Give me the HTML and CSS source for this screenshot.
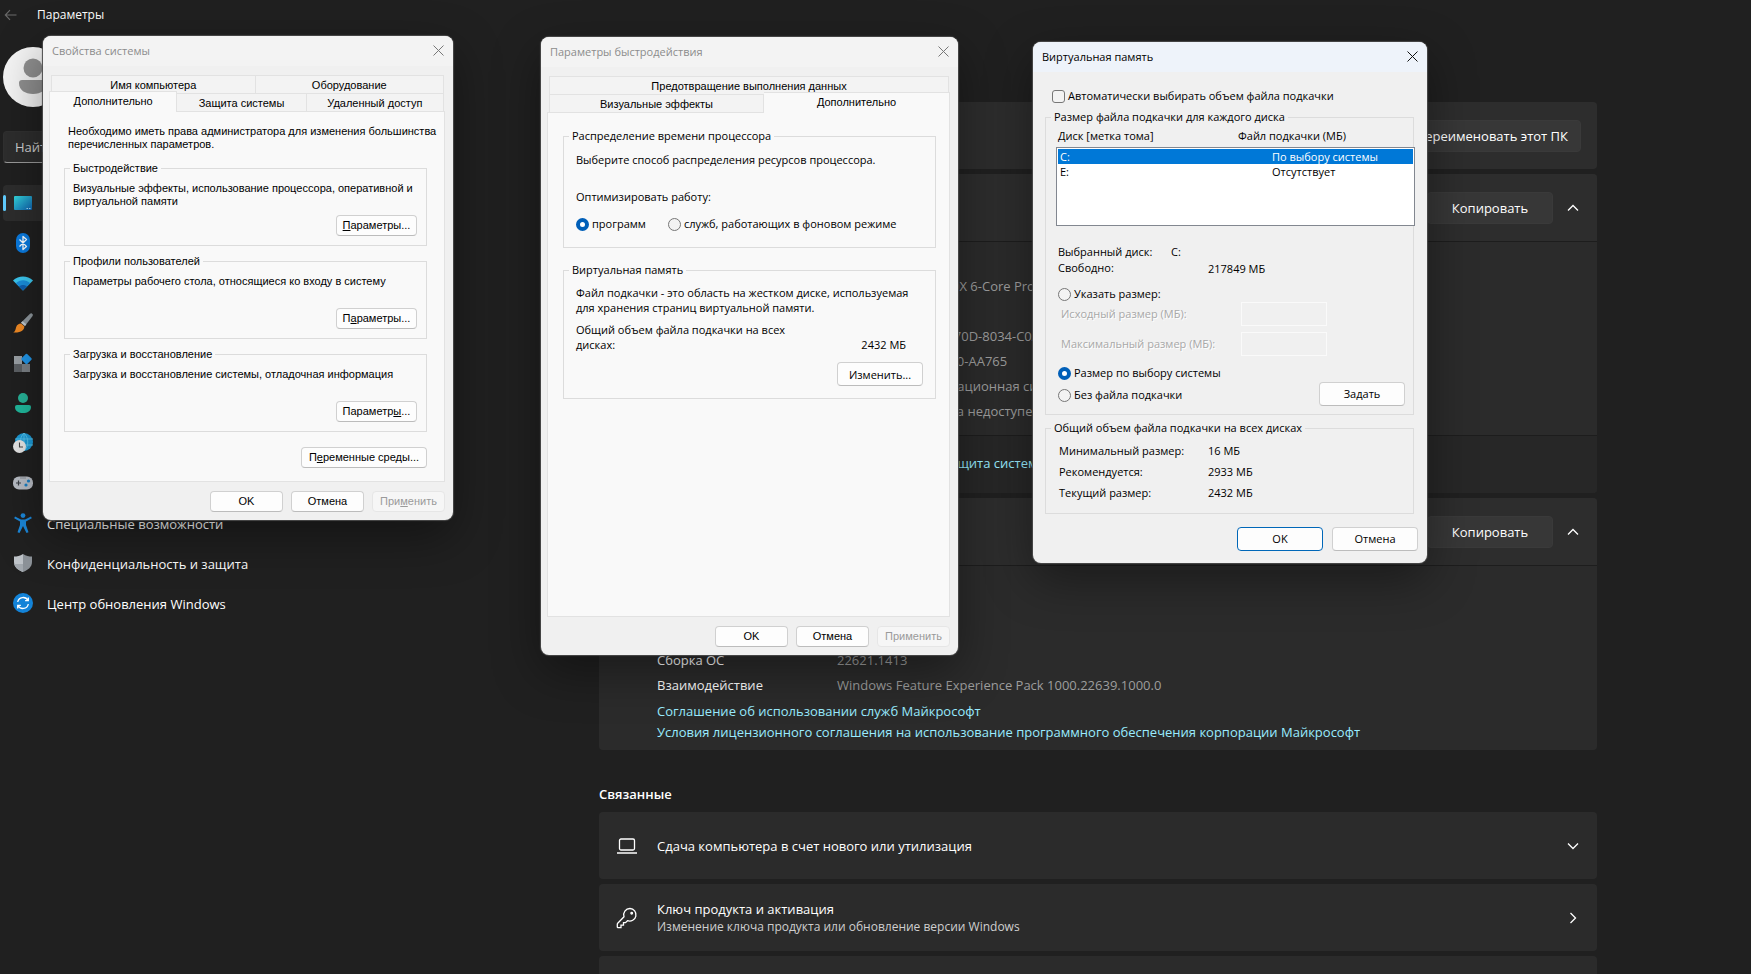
FILE: index.html
```
<!DOCTYPE html>
<html lang="ru">
<head>
<meta charset="utf-8">
<title>Параметры</title>
<link rel="stylesheet" href="styles.css">
</head>
<body>
<div class="settings">
  <header class="topbar">
    <button class="back" type="button" aria-label="Назад">
      <svg width="14" height="12" viewBox="0 0 14 12"><path d="M1.5 6H12.500M6 1.200L1.300 6L6 10.800" fill="none" stroke="#6a6a6a" stroke-width="1.100"/></svg>
    </button>
    <h1 class="app-title">Параметры</h1>
  </header>

  <div class="columns">
    <aside class="sidebar">
      <div class="avatar">
        <svg width="60" height="60" viewBox="0 0 60 60"><circle cx="30" cy="30" r="30" fill="#f4f4f4"/><circle cx="30" cy="21" r="9.500" fill="#8f8f8f"/><path d="M19 33h22a3 3 0 0 1 3 3c0 7-6 11-14 11s-14-4-14-11a3 3 0 0 1 3-3z" fill="#8f8f8f"/></svg>
      </div>
      <input class="search" type="text" placeholder="Найти параметр" aria-label="Найти параметр">
      <nav class="nav">
        <a class="nav-item current" href="#">
          <svg class="nav-icon" viewBox="0 0 20 20"><defs><linearGradient id="g-sys" x1="0" y1="0" x2="1" y2="1"><stop offset="0" stop-color="#34d6dc"/><stop offset="1" stop-color="#0f62b0"/></linearGradient></defs><rect x="1" y="3" width="18" height="14" rx="1" fill="url(#g-sys)"/><path d="M13.500 15.500h1.500M16 15.500h1.500" stroke="#9fd8f5" stroke-width="1"/></svg>
          <span>Система</span></a>
        <a class="nav-item" href="#">
          <svg class="nav-icon" viewBox="0 0 20 20"><rect x="3" y="0" width="14" height="20" rx="7" fill="#0a7be0"/><path d="M6.500 6.500l7 7L10 16.500V3.500l3.500 3L6.500 13.500" fill="none" stroke="#fff" stroke-width="1.300" stroke-linejoin="round"/></svg>
          <span>Bluetooth и устройства</span></a>
        <a class="nav-item" href="#">
          <svg class="nav-icon" viewBox="0 0 20 20"><path d="M0 7.500C5.500 2 14.500 2 20 7.500L10 17.500z" fill="#3cc8f0"/><path d="M2.800 10.300C7 6.300 13 6.300 17.200 10.300L10 17.500z" fill="#1a8fdc"/><path d="M6 13.500c2.400-2 5.600-2 8 0l-4 4z" fill="#0f5fb0"/></svg>
          <span>Сеть и Интернет</span></a>
        <a class="nav-item" href="#">
          <svg class="nav-icon" viewBox="0 0 20 20"><path d="M18.800.4c1.200.6 1.300 1.500.8 2.500L12 13l-4-3.200L17 .8c.6-.5 1.200-.7 1.800-.4z" fill="#8e979d"/><path d="M9.500 8.200L8 9.800l4 3.200 1.300-1.700z" fill="#c3cacf"/><path d="M8 10.500l3.300 2.800c.3 4-3.500 6.700-11 6.200 2.300-1.200 2-3 2.800-5.300.8-2.400 2.700-3.700 4.900-3.700z" fill="#f08a24"/></svg>
          <span>Персонализация</span></a>
        <a class="nav-item" href="#">
          <svg class="nav-icon" viewBox="0 0 20 20"><rect x="1" y="3" width="8" height="8" fill="#9aa0a5"/><rect x="1" y="11" width="8" height="8" fill="#5d6165"/><rect x="9" y="11" width="8" height="8" fill="#7b8085"/><rect x="9.500" y="2" width="8" height="8" rx="1" transform="rotate(45 13.500 6)" fill="#2196e8"/></svg>
          <span>Приложения</span></a>
        <a class="nav-item" href="#">
          <svg class="nav-icon" viewBox="0 0 20 20"><circle cx="10" cy="5" r="5" fill="#27b398"/><path d="M4 12h12a2 2 0 0 1 2 2c0 4-3.500 6-8 6s-8-2-8-6a2 2 0 0 1 2-2z" fill="#20b89c"/></svg>
          <span>Учетные записи</span></a>
        <a class="nav-item" href="#">
          <svg class="nav-icon" viewBox="0 0 20 20"><circle cx="11" cy="9" r="9" fill="#1c9ad6"/><path d="M11 0v18M2 6h18M3 12h17M11 0c-5 5-5 13 0 18M11 0c5 5 5 13 0 18" fill="none" stroke="#5fc9ee" stroke-width=".8"/><circle cx="6.500" cy="13.500" r="6.500" fill="#e6e6e6"/><path d="M6.500 9.500v4.500h3.500" fill="none" stroke="#444" stroke-width="1.100"/></svg>
          <span>Время и язык</span></a>
        <a class="nav-item" href="#">
          <svg class="nav-icon" viewBox="0 0 20 20"><rect x="0" y="3.500" width="20" height="13" rx="6" fill="#b9bec6"/><path d="M3 10h5M5.500 7.500v5" stroke="#3b3f45" stroke-width="1.200"/><circle cx="15.500" cy="8" r="1.600" fill="#1a7fc4"/><circle cx="13" cy="12" r="1.600" fill="#1a7fc4"/><path d="M7.500 5h5" stroke="#5a5f66" stroke-width="1" stroke-dasharray="1 1"/></svg>
          <span>Игры</span></a>
        <a class="nav-item" href="#">
          <svg class="nav-icon" viewBox="0 0 20 20"><circle cx="10" cy="2.600" r="2.400" fill="#1b86d8"/><path d="M2 3.500l6 3h4l6-3 .8 1.800L13 8.500v3.500l2.500 7.200-2 .8L10 13l-3.500 7-2-.8L7 12V8.500L1.200 5.300z" fill="#1b86d8"/></svg>
          <span>Специальные возможности</span></a>
        <a class="nav-item" href="#">
          <svg class="nav-icon" viewBox="0 0 20 20"><path d="M10 1c3 2 6 2.500 9 2.500V9c0 5-4 8-9 10z" fill="#8d9399"/><path d="M10 1C7 3 4 3.500 1 3.500V9c0 5 4 8 9 10z" fill="#bfc4c9"/><path d="M1.300 11H10v8c-4.500-1.700-8-4.300-8.700-8z" fill="#a3a9af"/></svg>
          <span>Конфиденциальность и защита</span></a>
        <a class="nav-item" href="#">
          <svg class="nav-icon" viewBox="0 0 20 20"><circle cx="10" cy="10" r="10" fill="#1383d8"/><path d="M4.700 9A5.500 5.500 0 0 1 15 7.500M15.300 11A5.500 5.500 0 0 1 5 12.500M15.300 4.500v3.200h-3.200M4.700 15.500v-3.200h3.200" fill="none" stroke="#fff" stroke-width="1.300"/></svg>
          <span>Центр обновления Windows</span></a>
      </nav>
    </aside>

    <main class="content">
      <div class="stack">
        <section class="card card-row end">
          <button class="dark-btn" type="button">Переименовать этот ПК</button>
        </section>

        <section class="card">
          <div class="card-row end">
            <button class="dark-btn wide" type="button">Копировать</button>
            <svg class="chev" viewBox="0 0 16 16"><path d="M3 10.500L8 5.500l5 5" /></svg>
          </div>
          <dl class="specs">
            <dt>Имя устройства</dt><dd>DESKTOP-4KR7UMV</dd>
            <dt>Процессор</dt><dd>AMD Ryzen™ 5 5600X 6-Core Processor</dd>
            <dt>ОЗУ</dt><dd>16,0 ГБ</dd>
            <dt>Код устройства</dt><dd>7ADCDD00-DFDB-470D-8034-C0A91B6D2E4F</dd>
            <dt>Код продукта</dt><dd>00330-80000-000000-AA765</dd>
            <dt>Тип системы</dt><dd>64-разрядная операционная система</dd>
            <dt>Перо и сенсорный ввод</dt><dd>Для этого монитора недоступен ввод с помощью пера</dd>
          </dl>
          <div class="related">
            <span class="related-label">Ссылки</span>
            <a href="#">Домен или рабочая группа</a>
            <a href="#">Защита системы</a>
          </div>
        </section>

        <section class="card">
          <div class="card-row end">
            <button class="dark-btn wide" type="button">Копировать</button>
            <svg class="chev" viewBox="0 0 16 16"><path d="M3 10.500L8 5.500l5 5" /></svg>
          </div>
          <dl class="specs os">
            <dt>Выпуск</dt><dd>Windows 11 Pro</dd>
            <dt>Версия</dt><dd>22H2</dd>
            <dt>Дата установки</dt><dd>2023</dd>
            <dt>Сборка ОС</dt><dd>22621.1413</dd>
            <dt>Взаимодействие</dt><dd>Windows Feature Experience Pack 1000.22639.1000.0</dd>
          </dl>
          <div class="legal">
            <a href="#">Соглашение об использовании служб Майкрософт</a>
            <a href="#">Условия лицензионного соглашения на использование программного обеспечения корпорации Майкрософт</a>
          </div>
        </section>

        <h2 class="section-title">Связанные</h2>

        <section class="card card-row">
          <svg class="card-icon" viewBox="0 0 22 22"><rect x="3.500" y="4" width="15" height="11" rx="1.500"/><path d="M1 18h20"/></svg>
          <div class="card-text"><span>Сдача компьютера в счет нового или утилизация</span></div>
          <svg class="chev" viewBox="0 0 16 16"><path d="M3 5.500l5 5 5-5" /></svg>
        </section>
        <section class="card card-row">
          <svg class="card-icon" viewBox="0 0 22 22"><path d="M14 1.500a6.300 6.300 0 0 0-6 8.300L1.700 16.200a1.500 1.500 0 0 0-.4 1V20c0 .4.300.700.700.700h3v-2.500h2.500v-2.500h2l2-2a6.300 6.300 0 1 0 2.500-12.200z"/><circle cx="15.700" cy="6.300" r=".8"/></svg>
          <div class="card-text"><span>Ключ продукта и активация</span><small>Изменение ключа продукта или обновление версии Windows</small></div>
          <svg class="chev" viewBox="0 0 16 16"><path d="M5.500 3l5 5-5 5" /></svg>
        </section>
        <section class="card card-row"></section>
      </div>
    </main>
  </div>
</div>

<section class="win win-system" role="dialog" aria-labelledby="t1">
  <header class="win-title"><h2 id="t1">Свойства системы</h2>
    <button class="close" type="button" aria-label="Закрыть"><svg width="11" height="11" viewBox="0 0 11 11"><path d="M.5.5l10 10M10.500.5l-10 10"/></svg></button></header>
  <div class="tabs" role="tablist">
    <div class="tab-row cols-system-top">
      <button type="button" class="tab" role="tab">Имя компьютера</button>
      <button type="button" class="tab" role="tab">Оборудование</button>
    </div>
    <div class="tab-row cols-system-bottom">
      <button type="button" class="tab active" role="tab" aria-selected="true">Дополнительно</button>
      <button type="button" class="tab" role="tab">Защита системы</button>
      <button type="button" class="tab" role="tab">Удаленный доступ</button>
    </div>
  </div>
  <div class="panel">
    <p class="intro">Необходимо иметь права администратора для изменения большинства перечисленных параметров.</p>
    <fieldset class="group">
      <legend>Быстродействие</legend>
      <p>Визуальные эффекты, использование процессора, оперативной и виртуальной памяти</p>
      <button type="button" class="btn"><u>П</u>араметры...</button>
    </fieldset>
    <fieldset class="group">
      <legend>Профили пользователей</legend>
      <p>Параметры рабочего стола, относящиеся ко входу в систему</p>
      <button type="button" class="btn">П<u>а</u>раметры...</button>
    </fieldset>
    <fieldset class="group">
      <legend>Загрузка и восстановление</legend>
      <p>Загрузка и восстановление системы, отладочная информация</p>
      <button type="button" class="btn">Параметр<u>ы</u>...</button>
    </fieldset>
    <button type="button" class="btn env">П<u>е</u>ременные среды...</button>
  </div>
  <footer class="win-foot">
    <button type="button" class="btn">OK</button>
    <button type="button" class="btn">Отмена</button>
    <button type="button" class="btn" disabled>При<u>м</u>енить</button>
  </footer>
</section>

<section class="win win-perf" role="dialog" aria-labelledby="t2">
  <header class="win-title"><h2 id="t2">Параметры быстродействия</h2>
    <button class="close" type="button" aria-label="Закрыть"><svg width="11" height="11" viewBox="0 0 11 11"><path d="M.5.5l10 10M10.500.5l-10 10"/></svg></button></header>
  <div class="tabs" role="tablist">
    <div class="tab-row">
      <button type="button" class="tab" role="tab">Предотвращение выполнения данных</button>
    </div>
    <div class="tab-row cols-perf-bottom">
      <button type="button" class="tab" role="tab">Визуальные эффекты</button>
      <button type="button" class="tab active last" role="tab" aria-selected="true">Дополнительно</button>
    </div>
  </div>
  <div class="panel">
    <fieldset class="group cpu">
      <legend>Распределение времени процессора</legend>
      <p>Выберите способ распределения ресурсов процессора.</p>
      <p class="optimise">Оптимизировать работу:</p>
      <div class="radios">
        <label><input type="radio" name="opt" checked>программ</label>
        <label><input type="radio" name="opt">служб, работающих в фоновом режиме</label>
      </div>
    </fieldset>
    <fieldset class="group vm">
      <legend>Виртуальная память</legend>
      <p>Файл подкачки - это область на жестком диске, используемая для хранения страниц виртуальной памяти.</p>
      <div class="total"><span class="total-label">Общий объем файла подкачки на всех дисках:</span><span>2432 МБ</span></div>
      <button type="button" class="btn big">Изменить...</button>
    </fieldset>
  </div>
  <footer class="win-foot">
    <button type="button" class="btn">OK</button>
    <button type="button" class="btn">Отмена</button>
    <button type="button" class="btn" disabled>Применить</button>
  </footer>
</section>

<section class="win win-memory" role="dialog" aria-labelledby="t3">
  <header class="win-title"><h2 id="t3">Виртуальная память</h2>
    <button class="close" type="button" aria-label="Закрыть"><svg width="11" height="11" viewBox="0 0 11 11"><path d="M.5.5l10 10M10.500.5l-10 10"/></svg></button></header>
  <div class="memory-body">
    <label class="auto"><input type="checkbox">Автоматически выбирать объем файла подкачки</label>
    <fieldset class="group drives">
      <legend>Размер файла подкачки для каждого диска</legend>
      <div class="drive-head"><span>Диск [метка тома]</span><span>Файл подкачки (МБ)</span></div>
      <div class="listbox">
        <table>
          <tr class="selected"><td>C:</td><td>По выбору системы</td></tr>
          <tr><td>E:</td><td>Отсутствует</td></tr>
        </table>
      </div>
      <div class="drive-info">
        <div class="selected-drive"><span>Выбранный диск:</span><span>C:</span></div>
        <div class="free"><span>Свободно:</span><span>217849 МБ</span></div>
      </div>
      <label class="custom"><input type="radio" name="size">Указать размер:</label>
      <div class="sizes">
        <label for="min">Исходный размер (МБ):</label><input id="min" type="text" disabled>
        <label for="max">Максимальный размер (МБ):</label><input id="max" type="text" disabled>
      </div>
      <div class="choice">
        <div class="choice-list">
          <label><input type="radio" name="size" checked>Размер по выбору системы</label>
          <label><input type="radio" name="size">Без файла подкачки</label>
        </div>
        <button type="button" class="btn big">Задать</button>
      </div>
    </fieldset>
    <fieldset class="group totals">
      <legend>Общий объем файла подкачки на всех дисках</legend>
      <dl>
        <dt>Минимальный размер:</dt><dd>16 МБ</dd>
        <dt>Рекомендуется:</dt><dd>2933 МБ</dd>
        <dt>Текущий размер:</dt><dd>2432 МБ</dd>
      </dl>
    </fieldset>
  </div>
  <footer class="win-foot">
    <button type="button" class="btn big default">OK</button>
    <button type="button" class="btn big">Отмена</button>
  </footer>
</section>
</body>
</html>
```
FILE: styles.css
```
* { box-sizing: border-box; }
body {
  margin: 0;
  height: 100vh;
  overflow: hidden;
  background: #202020;
  color: #fff;
  font: 13px/18px "Open Sans", "Noto Sans", sans-serif;
}
h1, h2, p, dl, dd { margin: 0; }
button, input { font: inherit; color: inherit; }
a { color: inherit; text-decoration: none; }

/* Settings window */
.settings { height: 100vh; display: flex; flex-direction: column; overflow: hidden; }
.topbar { height: 30px; flex: none; display: flex; align-items: center; gap: 19px; padding-left: 4px; }
.back { border: 0; background: none; padding: 0; width: 14px; display: flex; }
.app-title { font-size: 12px; font-weight: 500; line-height: 16px; }
.columns { flex: 1; display: flex; }
.sidebar { width: 445px; flex: none; padding: 17px 0 0 3px; }
.avatar { height: 60px; margin-bottom: 24px; }
.search {
  display: block; width: 320px; height: 32px; margin-bottom: 22px; padding: 0 11px;
  border: 1px solid #303030; border-bottom-color: #9a9a9a; border-radius: 4px; background: #2d2d2d;
}
.search::placeholder { color: #cfcfcf; opacity: 1; }
.nav { display: flex; flex-direction: column; gap: 4px; width: 320px; }
.nav-item { position: relative; height: 36px; display: flex; align-items: center; gap: 14px; padding-left: 10px; border-radius: 4px; }
.nav-item span { padding-top: 2px; }
.nav-item.current { background: #2d2d2d; }
.nav-item.current::before { content: ""; position: absolute; left: 0; top: 10px; width: 3px; height: 16px; border-radius: 2px; background: #60cdff; }
.nav-icon { width: 20px; height: 20px; flex: none; }

.content { flex: 1; padding: 72px 0 0; }
.stack { max-width: 998px; margin: 0 auto; display: flex; flex-direction: column; gap: 5px; }
.card { background: #2b2b2b; border-radius: 4px; overflow: hidden; flex: none; }
.card-row { height: 67px; display: flex; align-items: center; padding: 0 16px 0 17px; }
.card-row.end { justify-content: flex-end; background: #2d2d2d; }
.dark-btn { height: 32px; padding: 0 12px; border: 1px solid #3a3a3a; border-radius: 4px; background: #373737; }
.dark-btn.wide { width: 126px; margin-right: 12px; }
.chev { width: 16px; height: 16px; flex: none; fill: none; stroke: #fff; stroke-width: 1.3; }
.specs {
  display: grid; grid-template-columns: 180px 1fr; row-gap: 7px;
  padding: 10px 16px 15px 58px; border-top: 1px solid #1d1d1d;
}
.specs.os { padding-bottom: 8px; }
.specs dd { color: #9d9d9d; }
.related { height: 58px; display: flex; align-items: center; gap: 30px; padding: 0 0 4px 57px; background: #272727; border-top: 1px solid #1d1d1d; color: #99ebff; }
.related-label { width: 54px; color: #fff; }
.legal { display: flex; flex-direction: column; gap: 3px; padding: 0 58px 9px; color: #99ebff; }
.section-title { margin: 30px 0 4px; font-size: 13px; font-weight: 600; line-height: 18px; }
.card-icon { width: 22px; height: 22px; flex: none; margin-right: 19px; fill: none; stroke: #fff; stroke-width: 1.3; }
.card-text { flex: 1; display: flex; flex-direction: column; }
.card-text small { font-size: 12px; color: #cfcfcf; }

/* Classic dialogs */
.win {
  position: absolute; display: flex; flex-direction: column;
  background: #f0f0f0; color: #000; border-radius: 8px; overflow: hidden;
  font: 11px/16px "Open Sans", "Noto Sans", sans-serif;
  box-shadow: 0 0 1px 1px #4a4a4a, 0 16px 48px rgba(0, 0, 0, .4);
}
.win-system { left: 43px; top: 36px; width: 410px; }
.win-perf { left: 541px; top: 37px; width: 417px; }
.win-memory { left: 1033px; top: 42px; width: 394px; }

.win-title { height: 30px; flex: none; display: flex; align-items: center; justify-content: space-between; padding: 0 9px 1px; background: #f3f3f3; color: #8c8c8c; }
.win-title h2 { font-size: 11px; font-weight: 400; line-height: 16px; }
.win-memory .win-title { background: #eef3fa; color: #000; }
.close { border: 0; background: none; padding: 0; display: flex; }
.close svg { fill: none; stroke: #777; stroke-width: 1; }
.win-memory .close svg { stroke: #111; }

.tabs { margin: 9px 9px 0 8px; font: 11px/13px "Liberation Sans", Arial, sans-serif; }
.tab-row { display: grid; grid-template-columns: 1fr; }
.cols-system-top { grid-template-columns: 204fr 188fr; }
.cols-system-bottom { grid-template-columns: 126fr 129fr 137fr; }
.cols-perf-bottom { grid-template-columns: 215fr 185fr; }
.tab { height: 18px; padding: 2px 0 0; border: 1px solid #e2e2e2; border-bottom: 0; background: #f3f3f3; }
.tab + .tab { border-left: 0; }
.tab.active { position: relative; z-index: 1; height: 21px; margin: -2px 0 -1px -2px; padding: 0 0 2px; background: #f9f9f9; }
.tab.active.last { margin-left: 0; margin-right: -1px; }
.panel { margin: 0 8px 0 6px; border: 1px solid #e2e2e2; background: #f9f9f9; }

.group { display: flex; flex-direction: column; min-width: 0; margin: 0; border: 1px solid #dcdcdc; }
.group legend { padding: 0 3px; }
.btn { height: 21px; padding: 0; border: 1px solid #d0d0d0; border-bottom-color: #bcbcbc; border-radius: 4px; background: #fdfdfd; }
.btn:disabled { color: #9a9a9a; background: #f6f6f6; border-color: #e6e6e6; }
.btn.big { width: 86px; height: 24px; }
.btn.default { border-color: #0067b8; }
.win-foot { display: flex; justify-content: flex-end; gap: 8px; padding: 9px 8px 8px; font: 11px/13px "Liberation Sans", Arial, sans-serif; }
.win-foot .btn { width: 73px; }

input[type="radio"], input[type="checkbox"] {
  appearance: none; flex: none; width: 13px; height: 13px; margin: 0;
  border: 1px solid #777; border-radius: 50%; background: #f3f3f3;
}
input[type="checkbox"] { border-radius: 3px; }
input[type="radio"]:checked { border: 4px solid #005fb8; background: #fff; }
.win label { display: flex; align-items: center; gap: 3px; }

/* System properties */
.win-system .panel { display: flex; flex-direction: column; height: 371px; padding: 13px 17px 0 14px; font: 11px/13px "Liberation Sans", Arial, sans-serif; }
.intro { margin: 0 -14px 11px 4px; }
.win-system .group { height: 84px; margin-bottom: 9px; padding: 7px 9px 9px 8px; }
.win-system legend { margin-left: -3px; }
.win-system .group p { min-height: 26px; margin-right: -4px; }
.win-system .group .btn { width: 81px; margin-top: 7px; align-self: flex-end; }
.env { width: 126px; margin-top: 6px; align-self: flex-end; }

/* Performance options */
.win-perf .panel { min-height: 505px; padding: 15px 13px 0 15px; }
.win-perf .group { padding: 8px 12px 15px 12px; }
.win-perf legend { margin-left: -7px; }
.optimise { margin: 21px 0 11px; }
.radios { display: flex; gap: 22px; }
.win-perf .vm { margin-top: 14px; padding: 7px 12px 12px; line-height: 15px; }
.vm legend { line-height: 16px; }
.total { display: flex; justify-content: space-between; align-items: flex-end; margin: 7px 17px 10px 0; }
.total-label { width: 220px; }
.vm .btn { align-self: flex-end; }

/* Virtual memory */
.memory-body { padding: 16px 13px 0 12px; }
.auto { margin: 0 0 5px 7px; }
.drives { padding: 3px 0 8px 10px; }
.win-memory legend { margin-left: -5px; }
.drive-head { display: grid; grid-template-columns: 180px 1fr; padding-left: 2px; margin-bottom: 3px; }
.listbox { height: 79px; margin-right: -2px; padding: 1px; border: 1px solid #828790; background: #fff; }
.listbox table { width: 100%; border-collapse: collapse; line-height: 15px; }
.listbox td { padding: 0 0 0 2px; }
.listbox td:first-child { width: 212px; }
.listbox .selected { background: #0078d7; color: #fff; }
.drive-info { margin: 18px 0 9px 2px; }
.selected-drive { display: grid; grid-template-columns: 113px 1fr; }
.free { display: grid; grid-template-columns: 150px 1fr; }
.free span + span { padding-top: 1px; }
.custom { margin-left: 2px; }
.sizes { display: grid; grid-template-columns: 180px 86px; row-gap: 6px; margin: 0 0 9px 5px; color: #a8a8a8; text-shadow: 1px 1px 0 #fff; }
.sizes input { width: 86px; height: 24px; border: 1px solid #fafafa; background: #f0f0f0; }
.choice { display: flex; justify-content: space-between; align-items: flex-end; padding: 0 8px 0 2px; }
.choice-list { display: flex; flex-direction: column; gap: 6px; padding-bottom: 3px; }
.totals { margin-top: 5px; padding: 7px 10px 12px 13px; }
.win-memory .totals { margin-top: 5px; }
.win-memory .totals legend { margin-left: -8px; }
.totals dl { display: grid; grid-template-columns: 149px 1fr; row-gap: 5px; }
.win-memory .win-foot { gap: 9px; padding: 13px 9px 12px; font: 11px/16px "Open Sans", "Noto Sans", sans-serif; }
.win-memory .win-foot .btn { width: 86px; }
```
